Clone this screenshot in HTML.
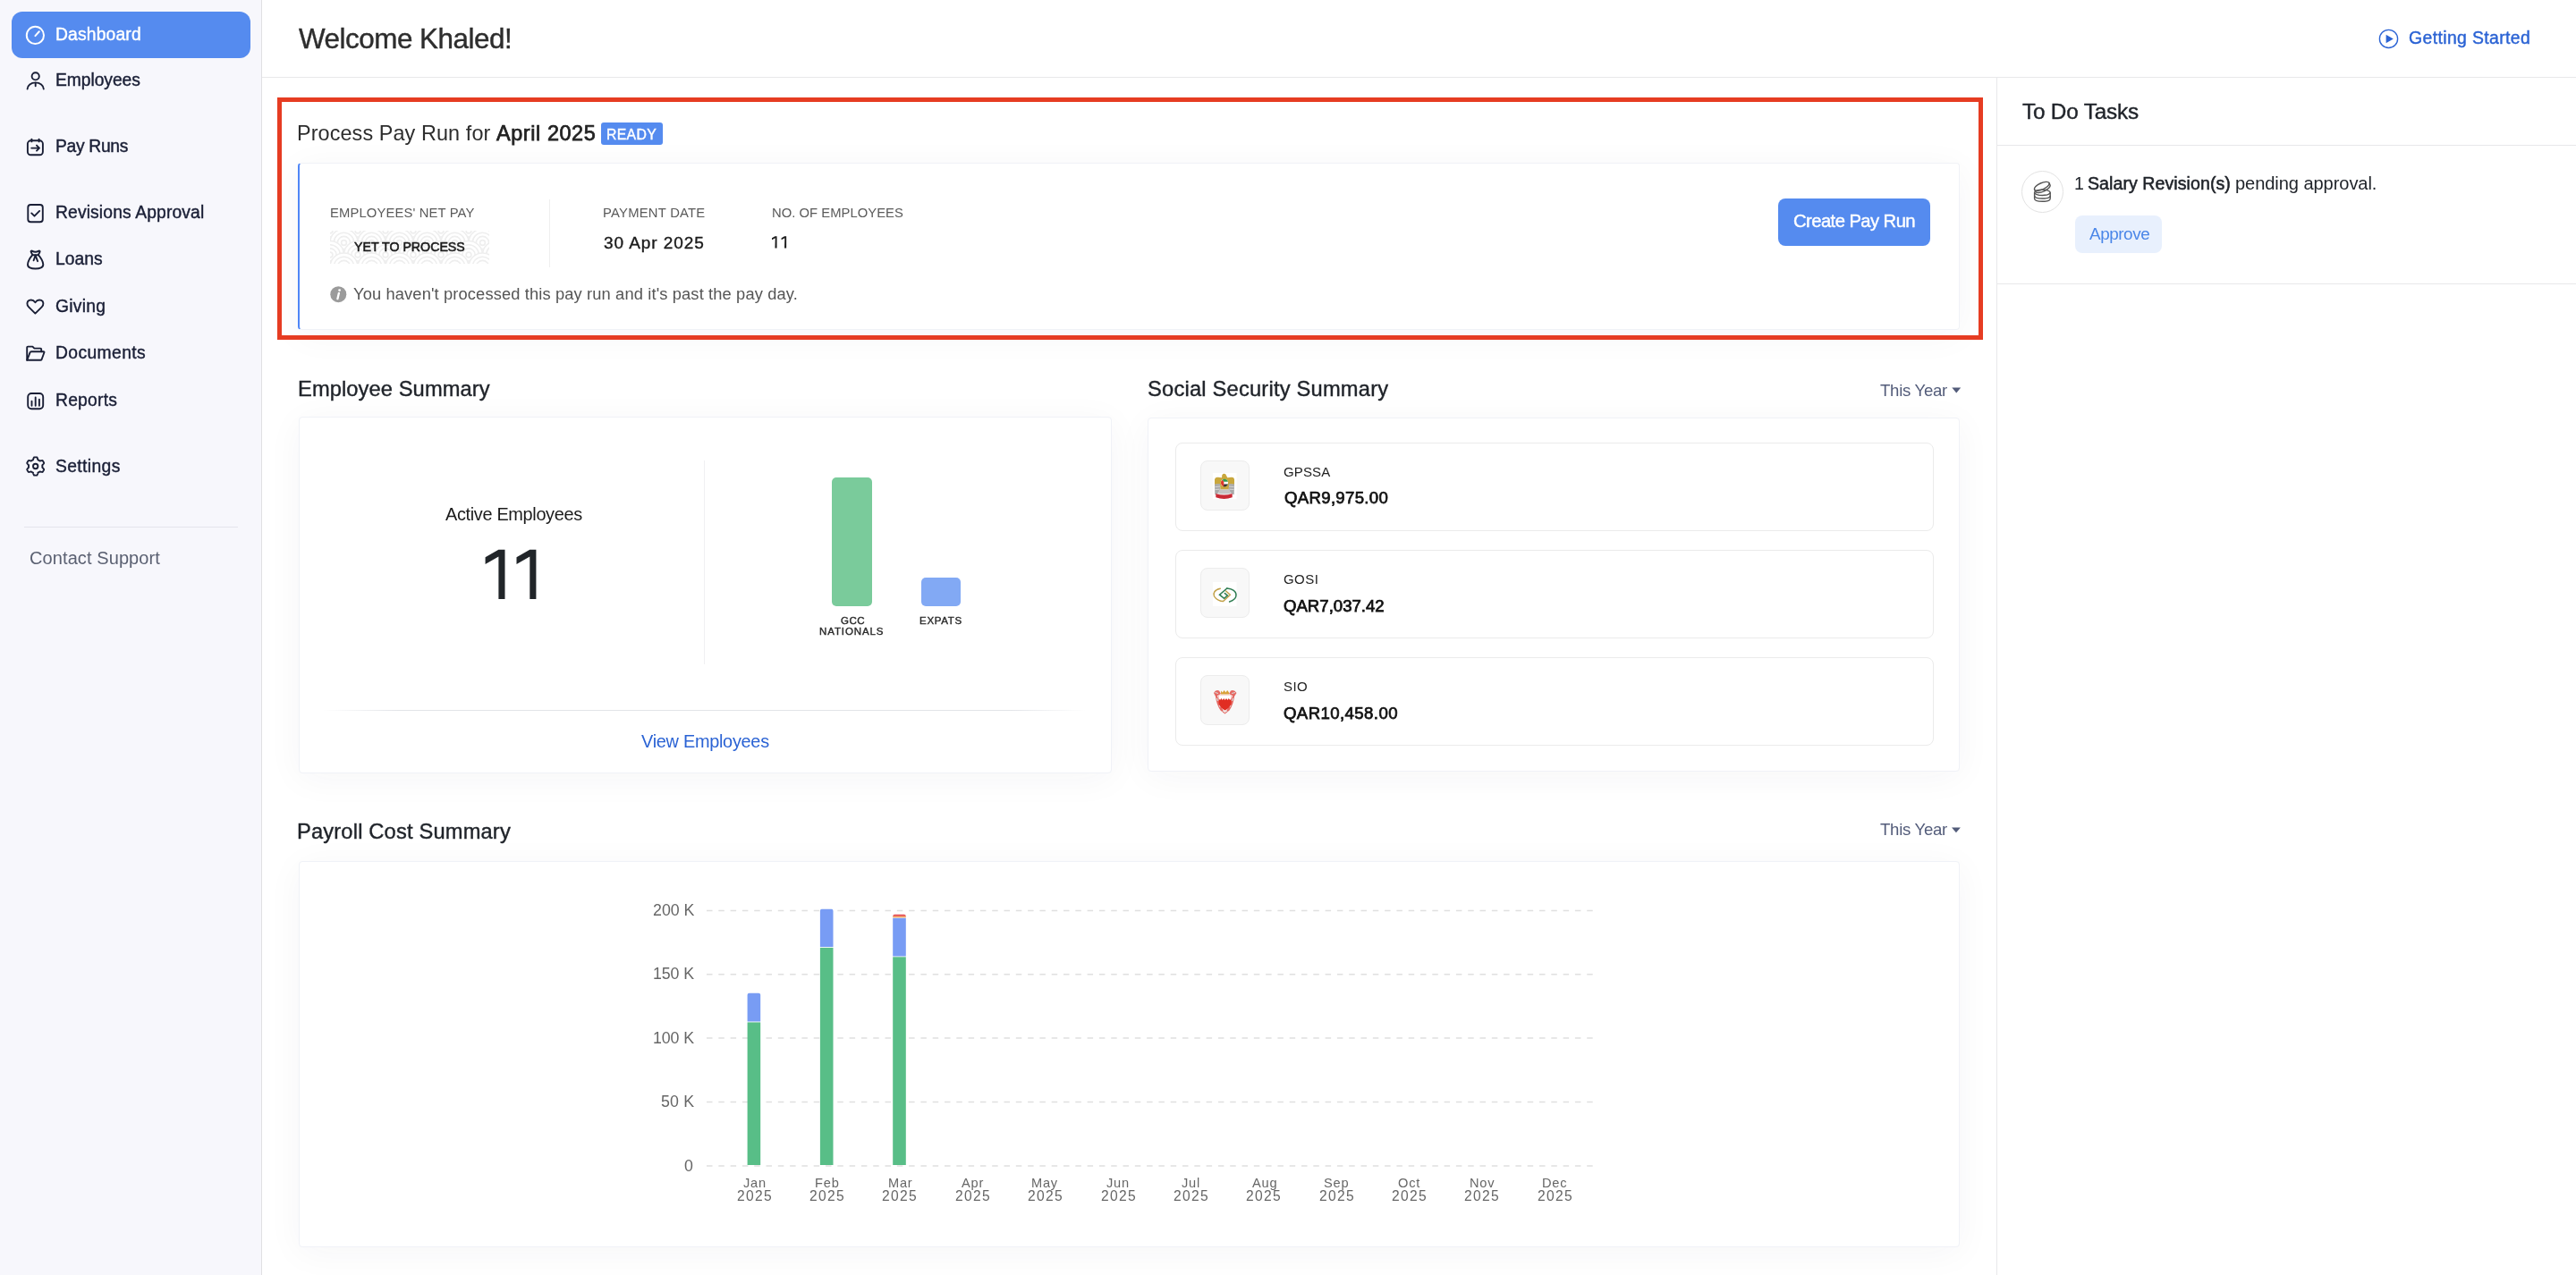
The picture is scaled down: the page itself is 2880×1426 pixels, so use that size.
<!DOCTYPE html>
<html><head><meta charset="utf-8"><title>Dashboard</title>
<style>
html,body{margin:0;padding:0;width:2880px;height:1426px;overflow:hidden;background:#ffffff;}
body{position:relative;font-family:"Liberation Sans",sans-serif;}
.a{position:absolute;box-sizing:border-box;}
.t{position:absolute;white-space:nowrap;line-height:1;will-change:transform;font-family:"Liberation Sans",sans-serif;}
</style></head><body>
<div class="a" style="left:0px;top:0px;width:292px;height:1426px;background:#f7f7fc;"></div>
<div class="a" style="left:292px;top:0px;width:1px;height:1426px;background:#e0e0e3;"></div>
<div class="a" style="left:13px;top:13px;width:267px;height:52px;background:#558bef;border-radius:12px;"></div>
<div class="a" style="left:27px;top:589px;width:239px;height:1px;background:#e4e4ec;"></div>
<div class="a" style="left:293px;top:86px;width:2587px;height:1px;background:#e8e8ea;"></div>
<div class="a" style="left:2232px;top:87px;width:1px;height:1339px;background:#e8e8ea;"></div>
<div class="a" style="left:2233px;top:162px;width:647px;height:1px;background:#e8e8ea;"></div>
<div class="a" style="left:2233px;top:317px;width:647px;height:1px;background:#e8e8ea;"></div>
<div class="a" style="left:2260px;top:190.5px;width:47px;height:47px;border:1px solid #e2e2e2;border-radius:50%;background:#fff;"></div>
<div class="a" style="left:2320px;top:240.5px;width:97px;height:42px;background:#e8f0fd;border-radius:8px;"></div>
<div class="a" style="left:333px;top:182px;width:1858px;height:187px;background:#fff;border:1px solid #f0f2f7;border-left:2px solid #4f86f7;border-radius:4px;box-shadow:0 6px 40px rgba(40,45,80,0.045);"></div>
<div class="a" style="left:672px;top:137px;width:69px;height:25px;background:#558bef;border-radius:3px;"></div>
<div class="a" style="left:614px;top:223px;width:1px;height:76px;background:#efefef;"></div>
<div class="a" style="left:1988px;top:222px;width:170px;height:53px;background:#558bef;border-radius:8px;"></div>
<div class="a" style="left:310px;top:109px;width:1907px;height:271px;border:5px solid #e63c22;"></div>
<div class="a" style="left:334px;top:466px;width:908.5px;height:399px;background:#fff;border:1px solid #f0f2f7;border-radius:4px;box-shadow:0 6px 40px rgba(40,45,80,0.045);"></div>
<div class="a" style="left:787px;top:515px;width:1px;height:228px;background:#f0f0f2;"></div>
<div class="a" style="left:930px;top:534px;width:45px;height:144px;background:#7acb9b;border-radius:5px;"></div>
<div class="a" style="left:1029.6px;top:646px;width:44.6px;height:32px;background:#82a9f4;border-radius:5px;"></div>
<div class="a" style="left:360px;top:794px;width:854px;height:1px;background:linear-gradient(90deg,rgba(226,228,232,0),#e2e4e8 10%,#e2e4e8 90%,rgba(226,228,232,0));"></div>
<div class="a" style="left:1283px;top:466.5px;width:908px;height:396px;background:#fff;border:1px solid #f0f2f7;border-radius:4px;box-shadow:0 6px 40px rgba(40,45,80,0.045);"></div>
<div class="a" style="left:1313.5px;top:494.5px;width:848px;height:99px;border:1px solid #ebebeb;border-radius:8px;background:#fff;"></div>
<div class="a" style="left:1342px;top:514.5px;width:55px;height:56px;border:1px solid #ececec;border-radius:8px;background:#f8f8f8;"></div>
<div class="a" style="left:1313.5px;top:614.5px;width:848px;height:99px;border:1px solid #ebebeb;border-radius:8px;background:#fff;"></div>
<div class="a" style="left:1342px;top:634.5px;width:55px;height:56px;border:1px solid #ececec;border-radius:8px;background:#f8f8f8;"></div>
<div class="a" style="left:1313.5px;top:734.5px;width:848px;height:99px;border:1px solid #ebebeb;border-radius:8px;background:#fff;"></div>
<div class="a" style="left:1342px;top:754.5px;width:55px;height:56px;border:1px solid #ececec;border-radius:8px;background:#f8f8f8;"></div>
<div class="a" style="left:334px;top:962.5px;width:1857px;height:432px;background:#fff;border:1px solid #f0f2f7;border-radius:4px;box-shadow:0 6px 40px rgba(40,45,80,0.045);"></div>
<svg class="a" style="left:369px;top:258px;width:178px;height:37px;" width="178" height="37" viewBox="0 0 178 37"><rect width="178" height="37" fill="#fff"/><circle cx="-15.5" cy="-13.5" r="15.5" fill="#fff" stroke="#eeeeee" stroke-width="1.6"/><circle cx="-15.5" cy="-13.5" r="11.3" fill="none" stroke="#eeeeee" stroke-width="1.6"/><circle cx="-15.5" cy="-13.5" r="7.1" fill="none" stroke="#eeeeee" stroke-width="1.6"/><circle cx="-15.5" cy="-13.5" r="2.9" fill="none" stroke="#eeeeee" stroke-width="1.6"/><circle cx="15.5" cy="-13.5" r="15.5" fill="#fff" stroke="#eeeeee" stroke-width="1.6"/><circle cx="15.5" cy="-13.5" r="11.3" fill="none" stroke="#eeeeee" stroke-width="1.6"/><circle cx="15.5" cy="-13.5" r="7.1" fill="none" stroke="#eeeeee" stroke-width="1.6"/><circle cx="15.5" cy="-13.5" r="2.9" fill="none" stroke="#eeeeee" stroke-width="1.6"/><circle cx="46.5" cy="-13.5" r="15.5" fill="#fff" stroke="#eeeeee" stroke-width="1.6"/><circle cx="46.5" cy="-13.5" r="11.3" fill="none" stroke="#eeeeee" stroke-width="1.6"/><circle cx="46.5" cy="-13.5" r="7.1" fill="none" stroke="#eeeeee" stroke-width="1.6"/><circle cx="46.5" cy="-13.5" r="2.9" fill="none" stroke="#eeeeee" stroke-width="1.6"/><circle cx="77.5" cy="-13.5" r="15.5" fill="#fff" stroke="#eeeeee" stroke-width="1.6"/><circle cx="77.5" cy="-13.5" r="11.3" fill="none" stroke="#eeeeee" stroke-width="1.6"/><circle cx="77.5" cy="-13.5" r="7.1" fill="none" stroke="#eeeeee" stroke-width="1.6"/><circle cx="77.5" cy="-13.5" r="2.9" fill="none" stroke="#eeeeee" stroke-width="1.6"/><circle cx="108.5" cy="-13.5" r="15.5" fill="#fff" stroke="#eeeeee" stroke-width="1.6"/><circle cx="108.5" cy="-13.5" r="11.3" fill="none" stroke="#eeeeee" stroke-width="1.6"/><circle cx="108.5" cy="-13.5" r="7.1" fill="none" stroke="#eeeeee" stroke-width="1.6"/><circle cx="108.5" cy="-13.5" r="2.9" fill="none" stroke="#eeeeee" stroke-width="1.6"/><circle cx="139.5" cy="-13.5" r="15.5" fill="#fff" stroke="#eeeeee" stroke-width="1.6"/><circle cx="139.5" cy="-13.5" r="11.3" fill="none" stroke="#eeeeee" stroke-width="1.6"/><circle cx="139.5" cy="-13.5" r="7.1" fill="none" stroke="#eeeeee" stroke-width="1.6"/><circle cx="139.5" cy="-13.5" r="2.9" fill="none" stroke="#eeeeee" stroke-width="1.6"/><circle cx="170.5" cy="-13.5" r="15.5" fill="#fff" stroke="#eeeeee" stroke-width="1.6"/><circle cx="170.5" cy="-13.5" r="11.3" fill="none" stroke="#eeeeee" stroke-width="1.6"/><circle cx="170.5" cy="-13.5" r="7.1" fill="none" stroke="#eeeeee" stroke-width="1.6"/><circle cx="170.5" cy="-13.5" r="2.9" fill="none" stroke="#eeeeee" stroke-width="1.6"/><circle cx="201.5" cy="-13.5" r="15.5" fill="#fff" stroke="#eeeeee" stroke-width="1.6"/><circle cx="201.5" cy="-13.5" r="11.3" fill="none" stroke="#eeeeee" stroke-width="1.6"/><circle cx="201.5" cy="-13.5" r="7.1" fill="none" stroke="#eeeeee" stroke-width="1.6"/><circle cx="201.5" cy="-13.5" r="2.9" fill="none" stroke="#eeeeee" stroke-width="1.6"/><circle cx="232.5" cy="-13.5" r="15.5" fill="#fff" stroke="#eeeeee" stroke-width="1.6"/><circle cx="232.5" cy="-13.5" r="11.3" fill="none" stroke="#eeeeee" stroke-width="1.6"/><circle cx="232.5" cy="-13.5" r="7.1" fill="none" stroke="#eeeeee" stroke-width="1.6"/><circle cx="232.5" cy="-13.5" r="2.9" fill="none" stroke="#eeeeee" stroke-width="1.6"/><circle cx="-31.0" cy="0.0" r="15.5" fill="#fff" stroke="#eeeeee" stroke-width="1.6"/><circle cx="-31.0" cy="0.0" r="11.3" fill="none" stroke="#eeeeee" stroke-width="1.6"/><circle cx="-31.0" cy="0.0" r="7.1" fill="none" stroke="#eeeeee" stroke-width="1.6"/><circle cx="-31.0" cy="0.0" r="2.9" fill="none" stroke="#eeeeee" stroke-width="1.6"/><circle cx="0.0" cy="0.0" r="15.5" fill="#fff" stroke="#eeeeee" stroke-width="1.6"/><circle cx="0.0" cy="0.0" r="11.3" fill="none" stroke="#eeeeee" stroke-width="1.6"/><circle cx="0.0" cy="0.0" r="7.1" fill="none" stroke="#eeeeee" stroke-width="1.6"/><circle cx="0.0" cy="0.0" r="2.9" fill="none" stroke="#eeeeee" stroke-width="1.6"/><circle cx="31.0" cy="0.0" r="15.5" fill="#fff" stroke="#eeeeee" stroke-width="1.6"/><circle cx="31.0" cy="0.0" r="11.3" fill="none" stroke="#eeeeee" stroke-width="1.6"/><circle cx="31.0" cy="0.0" r="7.1" fill="none" stroke="#eeeeee" stroke-width="1.6"/><circle cx="31.0" cy="0.0" r="2.9" fill="none" stroke="#eeeeee" stroke-width="1.6"/><circle cx="62.0" cy="0.0" r="15.5" fill="#fff" stroke="#eeeeee" stroke-width="1.6"/><circle cx="62.0" cy="0.0" r="11.3" fill="none" stroke="#eeeeee" stroke-width="1.6"/><circle cx="62.0" cy="0.0" r="7.1" fill="none" stroke="#eeeeee" stroke-width="1.6"/><circle cx="62.0" cy="0.0" r="2.9" fill="none" stroke="#eeeeee" stroke-width="1.6"/><circle cx="93.0" cy="0.0" r="15.5" fill="#fff" stroke="#eeeeee" stroke-width="1.6"/><circle cx="93.0" cy="0.0" r="11.3" fill="none" stroke="#eeeeee" stroke-width="1.6"/><circle cx="93.0" cy="0.0" r="7.1" fill="none" stroke="#eeeeee" stroke-width="1.6"/><circle cx="93.0" cy="0.0" r="2.9" fill="none" stroke="#eeeeee" stroke-width="1.6"/><circle cx="124.0" cy="0.0" r="15.5" fill="#fff" stroke="#eeeeee" stroke-width="1.6"/><circle cx="124.0" cy="0.0" r="11.3" fill="none" stroke="#eeeeee" stroke-width="1.6"/><circle cx="124.0" cy="0.0" r="7.1" fill="none" stroke="#eeeeee" stroke-width="1.6"/><circle cx="124.0" cy="0.0" r="2.9" fill="none" stroke="#eeeeee" stroke-width="1.6"/><circle cx="155.0" cy="0.0" r="15.5" fill="#fff" stroke="#eeeeee" stroke-width="1.6"/><circle cx="155.0" cy="0.0" r="11.3" fill="none" stroke="#eeeeee" stroke-width="1.6"/><circle cx="155.0" cy="0.0" r="7.1" fill="none" stroke="#eeeeee" stroke-width="1.6"/><circle cx="155.0" cy="0.0" r="2.9" fill="none" stroke="#eeeeee" stroke-width="1.6"/><circle cx="186.0" cy="0.0" r="15.5" fill="#fff" stroke="#eeeeee" stroke-width="1.6"/><circle cx="186.0" cy="0.0" r="11.3" fill="none" stroke="#eeeeee" stroke-width="1.6"/><circle cx="186.0" cy="0.0" r="7.1" fill="none" stroke="#eeeeee" stroke-width="1.6"/><circle cx="186.0" cy="0.0" r="2.9" fill="none" stroke="#eeeeee" stroke-width="1.6"/><circle cx="217.0" cy="0.0" r="15.5" fill="#fff" stroke="#eeeeee" stroke-width="1.6"/><circle cx="217.0" cy="0.0" r="11.3" fill="none" stroke="#eeeeee" stroke-width="1.6"/><circle cx="217.0" cy="0.0" r="7.1" fill="none" stroke="#eeeeee" stroke-width="1.6"/><circle cx="217.0" cy="0.0" r="2.9" fill="none" stroke="#eeeeee" stroke-width="1.6"/><circle cx="-15.5" cy="13.5" r="15.5" fill="#fff" stroke="#eeeeee" stroke-width="1.6"/><circle cx="-15.5" cy="13.5" r="11.3" fill="none" stroke="#eeeeee" stroke-width="1.6"/><circle cx="-15.5" cy="13.5" r="7.1" fill="none" stroke="#eeeeee" stroke-width="1.6"/><circle cx="-15.5" cy="13.5" r="2.9" fill="none" stroke="#eeeeee" stroke-width="1.6"/><circle cx="15.5" cy="13.5" r="15.5" fill="#fff" stroke="#eeeeee" stroke-width="1.6"/><circle cx="15.5" cy="13.5" r="11.3" fill="none" stroke="#eeeeee" stroke-width="1.6"/><circle cx="15.5" cy="13.5" r="7.1" fill="none" stroke="#eeeeee" stroke-width="1.6"/><circle cx="15.5" cy="13.5" r="2.9" fill="none" stroke="#eeeeee" stroke-width="1.6"/><circle cx="46.5" cy="13.5" r="15.5" fill="#fff" stroke="#eeeeee" stroke-width="1.6"/><circle cx="46.5" cy="13.5" r="11.3" fill="none" stroke="#eeeeee" stroke-width="1.6"/><circle cx="46.5" cy="13.5" r="7.1" fill="none" stroke="#eeeeee" stroke-width="1.6"/><circle cx="46.5" cy="13.5" r="2.9" fill="none" stroke="#eeeeee" stroke-width="1.6"/><circle cx="77.5" cy="13.5" r="15.5" fill="#fff" stroke="#eeeeee" stroke-width="1.6"/><circle cx="77.5" cy="13.5" r="11.3" fill="none" stroke="#eeeeee" stroke-width="1.6"/><circle cx="77.5" cy="13.5" r="7.1" fill="none" stroke="#eeeeee" stroke-width="1.6"/><circle cx="77.5" cy="13.5" r="2.9" fill="none" stroke="#eeeeee" stroke-width="1.6"/><circle cx="108.5" cy="13.5" r="15.5" fill="#fff" stroke="#eeeeee" stroke-width="1.6"/><circle cx="108.5" cy="13.5" r="11.3" fill="none" stroke="#eeeeee" stroke-width="1.6"/><circle cx="108.5" cy="13.5" r="7.1" fill="none" stroke="#eeeeee" stroke-width="1.6"/><circle cx="108.5" cy="13.5" r="2.9" fill="none" stroke="#eeeeee" stroke-width="1.6"/><circle cx="139.5" cy="13.5" r="15.5" fill="#fff" stroke="#eeeeee" stroke-width="1.6"/><circle cx="139.5" cy="13.5" r="11.3" fill="none" stroke="#eeeeee" stroke-width="1.6"/><circle cx="139.5" cy="13.5" r="7.1" fill="none" stroke="#eeeeee" stroke-width="1.6"/><circle cx="139.5" cy="13.5" r="2.9" fill="none" stroke="#eeeeee" stroke-width="1.6"/><circle cx="170.5" cy="13.5" r="15.5" fill="#fff" stroke="#eeeeee" stroke-width="1.6"/><circle cx="170.5" cy="13.5" r="11.3" fill="none" stroke="#eeeeee" stroke-width="1.6"/><circle cx="170.5" cy="13.5" r="7.1" fill="none" stroke="#eeeeee" stroke-width="1.6"/><circle cx="170.5" cy="13.5" r="2.9" fill="none" stroke="#eeeeee" stroke-width="1.6"/><circle cx="201.5" cy="13.5" r="15.5" fill="#fff" stroke="#eeeeee" stroke-width="1.6"/><circle cx="201.5" cy="13.5" r="11.3" fill="none" stroke="#eeeeee" stroke-width="1.6"/><circle cx="201.5" cy="13.5" r="7.1" fill="none" stroke="#eeeeee" stroke-width="1.6"/><circle cx="201.5" cy="13.5" r="2.9" fill="none" stroke="#eeeeee" stroke-width="1.6"/><circle cx="232.5" cy="13.5" r="15.5" fill="#fff" stroke="#eeeeee" stroke-width="1.6"/><circle cx="232.5" cy="13.5" r="11.3" fill="none" stroke="#eeeeee" stroke-width="1.6"/><circle cx="232.5" cy="13.5" r="7.1" fill="none" stroke="#eeeeee" stroke-width="1.6"/><circle cx="232.5" cy="13.5" r="2.9" fill="none" stroke="#eeeeee" stroke-width="1.6"/><circle cx="-31.0" cy="27.0" r="15.5" fill="#fff" stroke="#eeeeee" stroke-width="1.6"/><circle cx="-31.0" cy="27.0" r="11.3" fill="none" stroke="#eeeeee" stroke-width="1.6"/><circle cx="-31.0" cy="27.0" r="7.1" fill="none" stroke="#eeeeee" stroke-width="1.6"/><circle cx="-31.0" cy="27.0" r="2.9" fill="none" stroke="#eeeeee" stroke-width="1.6"/><circle cx="0.0" cy="27.0" r="15.5" fill="#fff" stroke="#eeeeee" stroke-width="1.6"/><circle cx="0.0" cy="27.0" r="11.3" fill="none" stroke="#eeeeee" stroke-width="1.6"/><circle cx="0.0" cy="27.0" r="7.1" fill="none" stroke="#eeeeee" stroke-width="1.6"/><circle cx="0.0" cy="27.0" r="2.9" fill="none" stroke="#eeeeee" stroke-width="1.6"/><circle cx="31.0" cy="27.0" r="15.5" fill="#fff" stroke="#eeeeee" stroke-width="1.6"/><circle cx="31.0" cy="27.0" r="11.3" fill="none" stroke="#eeeeee" stroke-width="1.6"/><circle cx="31.0" cy="27.0" r="7.1" fill="none" stroke="#eeeeee" stroke-width="1.6"/><circle cx="31.0" cy="27.0" r="2.9" fill="none" stroke="#eeeeee" stroke-width="1.6"/><circle cx="62.0" cy="27.0" r="15.5" fill="#fff" stroke="#eeeeee" stroke-width="1.6"/><circle cx="62.0" cy="27.0" r="11.3" fill="none" stroke="#eeeeee" stroke-width="1.6"/><circle cx="62.0" cy="27.0" r="7.1" fill="none" stroke="#eeeeee" stroke-width="1.6"/><circle cx="62.0" cy="27.0" r="2.9" fill="none" stroke="#eeeeee" stroke-width="1.6"/><circle cx="93.0" cy="27.0" r="15.5" fill="#fff" stroke="#eeeeee" stroke-width="1.6"/><circle cx="93.0" cy="27.0" r="11.3" fill="none" stroke="#eeeeee" stroke-width="1.6"/><circle cx="93.0" cy="27.0" r="7.1" fill="none" stroke="#eeeeee" stroke-width="1.6"/><circle cx="93.0" cy="27.0" r="2.9" fill="none" stroke="#eeeeee" stroke-width="1.6"/><circle cx="124.0" cy="27.0" r="15.5" fill="#fff" stroke="#eeeeee" stroke-width="1.6"/><circle cx="124.0" cy="27.0" r="11.3" fill="none" stroke="#eeeeee" stroke-width="1.6"/><circle cx="124.0" cy="27.0" r="7.1" fill="none" stroke="#eeeeee" stroke-width="1.6"/><circle cx="124.0" cy="27.0" r="2.9" fill="none" stroke="#eeeeee" stroke-width="1.6"/><circle cx="155.0" cy="27.0" r="15.5" fill="#fff" stroke="#eeeeee" stroke-width="1.6"/><circle cx="155.0" cy="27.0" r="11.3" fill="none" stroke="#eeeeee" stroke-width="1.6"/><circle cx="155.0" cy="27.0" r="7.1" fill="none" stroke="#eeeeee" stroke-width="1.6"/><circle cx="155.0" cy="27.0" r="2.9" fill="none" stroke="#eeeeee" stroke-width="1.6"/><circle cx="186.0" cy="27.0" r="15.5" fill="#fff" stroke="#eeeeee" stroke-width="1.6"/><circle cx="186.0" cy="27.0" r="11.3" fill="none" stroke="#eeeeee" stroke-width="1.6"/><circle cx="186.0" cy="27.0" r="7.1" fill="none" stroke="#eeeeee" stroke-width="1.6"/><circle cx="186.0" cy="27.0" r="2.9" fill="none" stroke="#eeeeee" stroke-width="1.6"/><circle cx="217.0" cy="27.0" r="15.5" fill="#fff" stroke="#eeeeee" stroke-width="1.6"/><circle cx="217.0" cy="27.0" r="11.3" fill="none" stroke="#eeeeee" stroke-width="1.6"/><circle cx="217.0" cy="27.0" r="7.1" fill="none" stroke="#eeeeee" stroke-width="1.6"/><circle cx="217.0" cy="27.0" r="2.9" fill="none" stroke="#eeeeee" stroke-width="1.6"/><circle cx="-15.5" cy="40.5" r="15.5" fill="#fff" stroke="#eeeeee" stroke-width="1.6"/><circle cx="-15.5" cy="40.5" r="11.3" fill="none" stroke="#eeeeee" stroke-width="1.6"/><circle cx="-15.5" cy="40.5" r="7.1" fill="none" stroke="#eeeeee" stroke-width="1.6"/><circle cx="-15.5" cy="40.5" r="2.9" fill="none" stroke="#eeeeee" stroke-width="1.6"/><circle cx="15.5" cy="40.5" r="15.5" fill="#fff" stroke="#eeeeee" stroke-width="1.6"/><circle cx="15.5" cy="40.5" r="11.3" fill="none" stroke="#eeeeee" stroke-width="1.6"/><circle cx="15.5" cy="40.5" r="7.1" fill="none" stroke="#eeeeee" stroke-width="1.6"/><circle cx="15.5" cy="40.5" r="2.9" fill="none" stroke="#eeeeee" stroke-width="1.6"/><circle cx="46.5" cy="40.5" r="15.5" fill="#fff" stroke="#eeeeee" stroke-width="1.6"/><circle cx="46.5" cy="40.5" r="11.3" fill="none" stroke="#eeeeee" stroke-width="1.6"/><circle cx="46.5" cy="40.5" r="7.1" fill="none" stroke="#eeeeee" stroke-width="1.6"/><circle cx="46.5" cy="40.5" r="2.9" fill="none" stroke="#eeeeee" stroke-width="1.6"/><circle cx="77.5" cy="40.5" r="15.5" fill="#fff" stroke="#eeeeee" stroke-width="1.6"/><circle cx="77.5" cy="40.5" r="11.3" fill="none" stroke="#eeeeee" stroke-width="1.6"/><circle cx="77.5" cy="40.5" r="7.1" fill="none" stroke="#eeeeee" stroke-width="1.6"/><circle cx="77.5" cy="40.5" r="2.9" fill="none" stroke="#eeeeee" stroke-width="1.6"/><circle cx="108.5" cy="40.5" r="15.5" fill="#fff" stroke="#eeeeee" stroke-width="1.6"/><circle cx="108.5" cy="40.5" r="11.3" fill="none" stroke="#eeeeee" stroke-width="1.6"/><circle cx="108.5" cy="40.5" r="7.1" fill="none" stroke="#eeeeee" stroke-width="1.6"/><circle cx="108.5" cy="40.5" r="2.9" fill="none" stroke="#eeeeee" stroke-width="1.6"/><circle cx="139.5" cy="40.5" r="15.5" fill="#fff" stroke="#eeeeee" stroke-width="1.6"/><circle cx="139.5" cy="40.5" r="11.3" fill="none" stroke="#eeeeee" stroke-width="1.6"/><circle cx="139.5" cy="40.5" r="7.1" fill="none" stroke="#eeeeee" stroke-width="1.6"/><circle cx="139.5" cy="40.5" r="2.9" fill="none" stroke="#eeeeee" stroke-width="1.6"/><circle cx="170.5" cy="40.5" r="15.5" fill="#fff" stroke="#eeeeee" stroke-width="1.6"/><circle cx="170.5" cy="40.5" r="11.3" fill="none" stroke="#eeeeee" stroke-width="1.6"/><circle cx="170.5" cy="40.5" r="7.1" fill="none" stroke="#eeeeee" stroke-width="1.6"/><circle cx="170.5" cy="40.5" r="2.9" fill="none" stroke="#eeeeee" stroke-width="1.6"/><circle cx="201.5" cy="40.5" r="15.5" fill="#fff" stroke="#eeeeee" stroke-width="1.6"/><circle cx="201.5" cy="40.5" r="11.3" fill="none" stroke="#eeeeee" stroke-width="1.6"/><circle cx="201.5" cy="40.5" r="7.1" fill="none" stroke="#eeeeee" stroke-width="1.6"/><circle cx="201.5" cy="40.5" r="2.9" fill="none" stroke="#eeeeee" stroke-width="1.6"/><circle cx="232.5" cy="40.5" r="15.5" fill="#fff" stroke="#eeeeee" stroke-width="1.6"/><circle cx="232.5" cy="40.5" r="11.3" fill="none" stroke="#eeeeee" stroke-width="1.6"/><circle cx="232.5" cy="40.5" r="7.1" fill="none" stroke="#eeeeee" stroke-width="1.6"/><circle cx="232.5" cy="40.5" r="2.9" fill="none" stroke="#eeeeee" stroke-width="1.6"/><circle cx="-31.0" cy="54.0" r="15.5" fill="#fff" stroke="#eeeeee" stroke-width="1.6"/><circle cx="-31.0" cy="54.0" r="11.3" fill="none" stroke="#eeeeee" stroke-width="1.6"/><circle cx="-31.0" cy="54.0" r="7.1" fill="none" stroke="#eeeeee" stroke-width="1.6"/><circle cx="-31.0" cy="54.0" r="2.9" fill="none" stroke="#eeeeee" stroke-width="1.6"/><circle cx="0.0" cy="54.0" r="15.5" fill="#fff" stroke="#eeeeee" stroke-width="1.6"/><circle cx="0.0" cy="54.0" r="11.3" fill="none" stroke="#eeeeee" stroke-width="1.6"/><circle cx="0.0" cy="54.0" r="7.1" fill="none" stroke="#eeeeee" stroke-width="1.6"/><circle cx="0.0" cy="54.0" r="2.9" fill="none" stroke="#eeeeee" stroke-width="1.6"/><circle cx="31.0" cy="54.0" r="15.5" fill="#fff" stroke="#eeeeee" stroke-width="1.6"/><circle cx="31.0" cy="54.0" r="11.3" fill="none" stroke="#eeeeee" stroke-width="1.6"/><circle cx="31.0" cy="54.0" r="7.1" fill="none" stroke="#eeeeee" stroke-width="1.6"/><circle cx="31.0" cy="54.0" r="2.9" fill="none" stroke="#eeeeee" stroke-width="1.6"/><circle cx="62.0" cy="54.0" r="15.5" fill="#fff" stroke="#eeeeee" stroke-width="1.6"/><circle cx="62.0" cy="54.0" r="11.3" fill="none" stroke="#eeeeee" stroke-width="1.6"/><circle cx="62.0" cy="54.0" r="7.1" fill="none" stroke="#eeeeee" stroke-width="1.6"/><circle cx="62.0" cy="54.0" r="2.9" fill="none" stroke="#eeeeee" stroke-width="1.6"/><circle cx="93.0" cy="54.0" r="15.5" fill="#fff" stroke="#eeeeee" stroke-width="1.6"/><circle cx="93.0" cy="54.0" r="11.3" fill="none" stroke="#eeeeee" stroke-width="1.6"/><circle cx="93.0" cy="54.0" r="7.1" fill="none" stroke="#eeeeee" stroke-width="1.6"/><circle cx="93.0" cy="54.0" r="2.9" fill="none" stroke="#eeeeee" stroke-width="1.6"/><circle cx="124.0" cy="54.0" r="15.5" fill="#fff" stroke="#eeeeee" stroke-width="1.6"/><circle cx="124.0" cy="54.0" r="11.3" fill="none" stroke="#eeeeee" stroke-width="1.6"/><circle cx="124.0" cy="54.0" r="7.1" fill="none" stroke="#eeeeee" stroke-width="1.6"/><circle cx="124.0" cy="54.0" r="2.9" fill="none" stroke="#eeeeee" stroke-width="1.6"/><circle cx="155.0" cy="54.0" r="15.5" fill="#fff" stroke="#eeeeee" stroke-width="1.6"/><circle cx="155.0" cy="54.0" r="11.3" fill="none" stroke="#eeeeee" stroke-width="1.6"/><circle cx="155.0" cy="54.0" r="7.1" fill="none" stroke="#eeeeee" stroke-width="1.6"/><circle cx="155.0" cy="54.0" r="2.9" fill="none" stroke="#eeeeee" stroke-width="1.6"/><circle cx="186.0" cy="54.0" r="15.5" fill="#fff" stroke="#eeeeee" stroke-width="1.6"/><circle cx="186.0" cy="54.0" r="11.3" fill="none" stroke="#eeeeee" stroke-width="1.6"/><circle cx="186.0" cy="54.0" r="7.1" fill="none" stroke="#eeeeee" stroke-width="1.6"/><circle cx="186.0" cy="54.0" r="2.9" fill="none" stroke="#eeeeee" stroke-width="1.6"/><circle cx="217.0" cy="54.0" r="15.5" fill="#fff" stroke="#eeeeee" stroke-width="1.6"/><circle cx="217.0" cy="54.0" r="11.3" fill="none" stroke="#eeeeee" stroke-width="1.6"/><circle cx="217.0" cy="54.0" r="7.1" fill="none" stroke="#eeeeee" stroke-width="1.6"/><circle cx="217.0" cy="54.0" r="2.9" fill="none" stroke="#eeeeee" stroke-width="1.6"/></svg>
<svg class="a" style="left:0;top:0;" width="2880" height="1426" viewBox="0 0 2880 1426"><g fill="none" stroke="#fff" stroke-width="2" stroke-linecap="round"><circle cx="39.4" cy="39.4" r="9.6"/><line x1="39.4" y1="40.1" x2="43.8" y2="35.3"/></g><g fill="none" stroke="#1a1f36" stroke-width="1.9" stroke-linecap="round" stroke-linejoin="round"><circle cx="39.7" cy="85.3" r="4.1"/><path d="M30.6,99.6 A9.1,7.2 0 0 1 48.8,99.6"/><line x1="39.7" y1="92.6" x2="39.7" y2="96.3"/><rect x="30.9" y="157.3" width="17" height="16" rx="3.5"/><line x1="35.4" y1="155.6" x2="35.4" y2="158.4"/><line x1="43.6" y1="155.6" x2="43.6" y2="158.4"/><path d="M35.2,165.6 H44 M41,162.6 L44,165.6 L41,168.6"/><rect x="31.3" y="229" width="16.5" height="19.3" rx="3"/><path d="M35.2,238.4 L38.5,241.7 L44.2,235.9"/><path d="M36.3,285.2 C33.5,288.5 31.2,292.5 31,295.8 C30.9,299.2 34.5,300.5 39.6,300.5 C44.7,300.5 48.4,299.2 48.3,295.8 C48.1,292.5 45.8,288.5 42.9,285.2 Z"/><path d="M36.3,285 L34.6,281.6 Q34.4,280.2 35.8,280.6 Q39.6,282.8 43.4,280.6 Q44.8,280.2 44.6,281.6 L42.9,285"/><path d="M37.6,291.3 L39.6,285.6 L42.1,292.2"/><path d="M39.4,350.6 L32.1,343.4 C29.6,340.9 29.9,337.1 32.6,335.9 C35.2,334.8 37.8,336 39.4,338.3 C41,336 43.6,334.8 46.2,335.9 C48.9,337.1 49.2,340.9 46.7,343.4 Z"/><path d="M30.2,402.8 V388.6 Q30.2,387.6 31.2,387.6 H36.4 L38.4,389.6 H45.2 Q46.2,389.6 46.2,390.6 V393.2"/><path d="M30.2,402.8 L33.6,394.2 Q34,393.2 35,393.2 H48.6 Q49.8,393.2 49.4,394.3 L46.6,402 Q46.2,402.8 45.3,402.8 Z"/><rect x="31.2" y="440" width="17" height="17.3" rx="4"/><path d="M35.5,448.8 V453.8 M39.7,444.5 V453.8 M43.9,446.8 V453.8"/></g><g fill="none" stroke="#1a1f36" stroke-width="1.9" stroke-linecap="round" stroke-linejoin="round"><path d="M39.70,511.35 L39.97,511.35 L40.23,511.36 L40.50,511.38 L40.76,511.41 L41.02,511.44 L41.29,511.47 L41.51,511.74 L41.69,512.11 L41.86,512.50 L42.00,512.90 L42.13,513.30 L42.24,513.70 L42.33,514.07 L42.44,514.36 L42.63,514.43 L42.81,514.51 L42.99,514.60 L43.17,514.68 L43.35,514.78 L43.53,514.87 L43.70,514.98 L43.87,515.08 L44.03,515.20 L44.20,515.31 L44.36,515.43 L44.51,515.55 L44.82,515.51 L45.19,515.40 L45.58,515.30 L45.99,515.21 L46.41,515.13 L46.83,515.08 L47.24,515.06 L47.59,515.11 L47.75,515.32 L47.91,515.53 L48.06,515.75 L48.21,515.97 L48.35,516.20 L48.49,516.42 L48.62,516.66 L48.74,516.89 L48.86,517.13 L48.97,517.37 L49.08,517.62 L49.18,517.86 L49.05,518.19 L48.83,518.53 L48.57,518.87 L48.30,519.20 L48.01,519.50 L47.73,519.79 L47.45,520.06 L47.26,520.30 L47.28,520.50 L47.31,520.70 L47.33,520.90 L47.34,521.10 L47.35,521.30 L47.35,521.50 L47.35,521.70 L47.34,521.90 L47.33,522.10 L47.31,522.30 L47.28,522.50 L47.26,522.70 L47.45,522.94 L47.73,523.21 L48.01,523.50 L48.30,523.80 L48.57,524.13 L48.83,524.47 L49.05,524.81 L49.18,525.14 L49.08,525.38 L48.97,525.63 L48.86,525.87 L48.74,526.11 L48.62,526.34 L48.49,526.58 L48.35,526.80 L48.21,527.03 L48.06,527.25 L47.91,527.47 L47.75,527.68 L47.59,527.89 L47.24,527.94 L46.83,527.92 L46.41,527.87 L45.99,527.79 L45.58,527.70 L45.19,527.60 L44.82,527.49 L44.51,527.45 L44.36,527.57 L44.20,527.69 L44.03,527.80 L43.87,527.92 L43.70,528.02 L43.53,528.13 L43.35,528.22 L43.17,528.32 L42.99,528.40 L42.81,528.49 L42.63,528.57 L42.44,528.64 L42.33,528.93 L42.24,529.30 L42.13,529.70 L42.00,530.10 L41.86,530.50 L41.69,530.89 L41.51,531.26 L41.29,531.53 L41.02,531.56 L40.76,531.59 L40.50,531.62 L40.23,531.64 L39.97,531.65 L39.70,531.65 L39.43,531.65 L39.17,531.64 L38.90,531.62 L38.64,531.59 L38.38,531.56 L38.11,531.53 L37.89,531.26 L37.71,530.89 L37.54,530.50 L37.40,530.10 L37.27,529.70 L37.16,529.30 L37.07,528.93 L36.96,528.64 L36.77,528.57 L36.59,528.49 L36.41,528.40 L36.23,528.32 L36.05,528.22 L35.88,528.13 L35.70,528.02 L35.53,527.92 L35.37,527.80 L35.20,527.69 L35.04,527.57 L34.89,527.45 L34.58,527.49 L34.21,527.60 L33.82,527.70 L33.41,527.79 L32.99,527.87 L32.57,527.92 L32.16,527.94 L31.81,527.89 L31.65,527.68 L31.49,527.47 L31.34,527.25 L31.19,527.03 L31.05,526.80 L30.91,526.58 L30.78,526.34 L30.66,526.11 L30.54,525.87 L30.43,525.63 L30.32,525.38 L30.22,525.14 L30.35,524.81 L30.57,524.47 L30.83,524.13 L31.10,523.80 L31.39,523.50 L31.67,523.21 L31.95,522.94 L32.14,522.70 L32.12,522.50 L32.09,522.30 L32.07,522.10 L32.06,521.90 L32.05,521.70 L32.05,521.50 L32.05,521.30 L32.06,521.10 L32.07,520.90 L32.09,520.70 L32.12,520.50 L32.14,520.30 L31.95,520.06 L31.67,519.79 L31.39,519.50 L31.10,519.20 L30.83,518.87 L30.57,518.53 L30.35,518.19 L30.22,517.86 L30.32,517.62 L30.43,517.37 L30.54,517.13 L30.66,516.89 L30.78,516.66 L30.91,516.42 L31.05,516.20 L31.19,515.97 L31.34,515.75 L31.49,515.53 L31.65,515.32 L31.81,515.11 L32.16,515.06 L32.57,515.08 L32.99,515.13 L33.41,515.21 L33.82,515.30 L34.21,515.40 L34.58,515.51 L34.89,515.55 L35.04,515.43 L35.20,515.31 L35.37,515.20 L35.53,515.08 L35.70,514.98 L35.88,514.87 L36.05,514.78 L36.23,514.68 L36.41,514.60 L36.59,514.51 L36.77,514.43 L36.96,514.36 L37.07,514.07 L37.16,513.70 L37.27,513.30 L37.40,512.90 L37.54,512.50 L37.71,512.11 L37.89,511.74 L38.11,511.47 L38.38,511.44 L38.64,511.41 L38.90,511.38 L39.17,511.36 L39.43,511.35 L39.70,511.35 Z"/><circle cx="39.7" cy="521.5" r="2.7"/></g><circle cx="2670.5" cy="43.4" r="10.1" fill="none" stroke="#2b63d4" stroke-width="1.35"/><path d="M2667.6,38.8 L2675.8,43.5 L2667.6,48.2 Z" fill="#2b63d4"/><g fill="none" stroke="#555" stroke-width="1.4" stroke-linejoin="round"><ellipse cx="2283.4" cy="215.3" rx="8.8" ry="3.2"/><path d="M2274.6,215.3 V222 C2274.6,224 2278.5,225.3 2283.4,225.3 C2288.3,225.3 2292.2,224 2292.2,222 V215.3"/><path d="M2274.6,218.7 C2274.6,220.7 2278.5,222 2283.4,222 C2288.3,222 2292.2,220.7 2292.2,218.7"/><g transform="rotate(-24 2282.8 208.3)"><ellipse cx="2282.8" cy="208.3" rx="9" ry="3.6"/><path d="M2273.8,208.3 V210.8 C2273.8,212.8 2277.8,214.3 2282.8,214.3 C2287.8,214.3 2291.8,212.8 2291.8,210.8 V208.3"/></g></g><circle cx="378.3" cy="329.2" r="9" fill="#9b9b9b"/><circle cx="379.6" cy="324.6" r="1.4" fill="#fff"/><path d="M378.9,327.8 L377.4,334.2" stroke="#fff" stroke-width="2.3" stroke-linecap="round"/><path d="M2182.3,433.6 H2192.2 L2187.25,439.4 Z" fill="#535c7a"/><path d="M2182,925.6 H2191.9 L2186.95,931.3 Z" fill="#535c7a"/><rect x="1356" y="529" width="26.6" height="29.2" fill="#fff"/><g><path d="M1358,536 Q1358.8,533.4 1361.8,533.8 L1366,534.2 L1366.3,531.2 Q1368,528.9 1370.2,530.3 L1372.3,534.2 L1376.4,533.8 Q1379.6,533.4 1380,536 L1380,542 L1374.2,541.2 L1373.8,547.6 L1364.4,547.6 L1364,541.2 L1358,542 Z" fill="#c9a73d"/><path d="M1358,541.6 L1364,541 L1364.4,548 L1361.8,551.4 L1358.3,553.6 Z" fill="#a9a9a9"/><path d="M1380,541.6 L1374,541 L1373.6,548 L1376.2,551.4 L1379.7,553.6 Z" fill="#a9a9a9"/><path d="M1358.5,544.5 L1364,544 M1358.5,547.5 L1363.5,547.2 M1379.5,544.5 L1374,544 M1379.5,547.5 L1374.5,547.2" stroke="#dcdcdc" stroke-width="0.9"/><path d="M1363.2,547.4 L1374.8,547.4 L1376,552.4 L1362,552.4 Z" fill="#c4c4c4"/><circle cx="1368.9" cy="540.1" r="4.1" fill="#fff"/><path d="M1366.6,536.7 A4.1,4.1 0 0 1 1373,538.7 L1368.3,538.7 Z" fill="#2f9d50"/><path d="M1368.3,541.6 L1373,541.6 A4.1,4.1 0 0 1 1367.2,543.9 Z" fill="#333"/><path d="M1366.6,536.7 L1368.3,538.7 L1368.3,544.1 A4.1,4.1 0 0 1 1366.6,536.7 Z" fill="#de3a2c"/><path d="M1359.3,552 Q1368.5,555.2 1377.7,552 L1377.7,556.2 Q1368.5,559.6 1359.3,556.2 Z" fill="#c92a35"/></g><rect x="1356" y="651" width="26.6" height="27" fill="#fff"/><g fill="none" stroke-linecap="round"><path d="M1364.3,658.2 C1358,659.5 1355.8,663.5 1357.5,667 C1359.5,670.5 1364.5,672.5 1367.5,672.5 L1375.3,665.3 L1370.6,661" stroke="#c2a24a" stroke-width="1.5"/><path d="M1371.8,658 C1377,658.5 1382,661 1382,665.5 C1382,669.5 1378,672 1374.6,673" stroke="#2f7d52" stroke-width="1.5"/><path d="M1371.8,658 L1363.5,665.2 L1368.6,669.3 L1372.3,666 L1369.4,663.6" stroke="#2f7d52" stroke-width="1.6"/></g><g><path d="M1357,775 Q1359,771 1363,772.5 L1365,776 L1361,778 Q1363,786 1366,792 L1369.5,797.5 L1373,792 Q1376,786 1378,778 L1374,776 L1376,772.5 Q1380,771 1382.5,775 L1380,779 Q1379,788 1374.5,794.5 L1369.5,798.5 L1364.5,794.5 Q1360,788 1359,779 Z" fill="#e0433c" opacity="0.8"/><path d="M1358.5,774.5 L1362,775.5 M1377,775.5 L1381,774.5 M1360.5,781 L1361.5,784 M1378.5,781 L1377.5,784 M1363,789 L1364.5,791 M1376,789 L1374.5,791 M1367,795 L1368.5,796 M1372,795 L1370.5,796" stroke="#d9d9d9" stroke-width="1.2"/><path d="M1362.6,777.2 L1376.6,777.2 L1376.6,786 Q1375.8,791.2 1369.6,794.6 Q1363.4,791.2 1362.6,786 Z" fill="#e12d22"/><path d="M1362.6,777.2 H1376.6 V781 L1375.2,783 L1373.8,781 L1372.4,783 L1371,781 L1369.6,783 L1368.2,781 L1366.8,783 L1365.4,781 L1364,783 L1362.6,781 Z" fill="#fff"/><path d="M1365,776.5 L1365,772.5 L1366.8,774.5 L1368.6,772 L1370.4,774.5 L1372.2,772 L1374,774.5 L1374,776.5 Z" fill="#d9a23a"/></g><path d="M542.6,623.3 L542.6,631.1 L557.4,622.6 L557.4,669.9 L564.5,669.9 L564.5,614.8 L557.4,614.8 Z" fill="#212529"/><path d="M577.5,623.3 L577.5,631.1 L592.3,622.6 L592.3,669.9 L599.4,669.9 L599.4,614.8 L592.3,614.8 Z" fill="#212529"/><path d="M863.00,266.35 L863.00,268.23 L866.75,266.18 L866.45,277.60 L868.55,277.60 L868.55,264.30 L866.45,264.30 Z" fill="#1b1b1b"/><path d="M873.60,266.35 L873.60,268.23 L877.35,266.18 L877.05,277.60 L879.15,277.60 L879.15,264.30 L877.05,264.30 Z" fill="#1b1b1b"/><line x1="790" y1="1018.4" x2="1783" y2="1018.4" stroke="#e0e0e0" stroke-width="1.5" stroke-dasharray="6.5 6.8"/><line x1="790" y1="1089.8" x2="1783" y2="1089.8" stroke="#e0e0e0" stroke-width="1.5" stroke-dasharray="6.5 6.8"/><line x1="790" y1="1161.1" x2="1783" y2="1161.1" stroke="#e0e0e0" stroke-width="1.5" stroke-dasharray="6.5 6.8"/><line x1="790" y1="1232.5" x2="1783" y2="1232.5" stroke="#e0e0e0" stroke-width="1.5" stroke-dasharray="6.5 6.8"/><line x1="790" y1="1303.9" x2="1783" y2="1303.9" stroke="#e0e0e0" stroke-width="1.5" stroke-dasharray="6.5 6.8"/><path d="M835.6,1142.6 V1112.8 Q835.6,1110.8 837.6,1110.8 H848.2 Q850.2,1110.8 850.2,1112.8 V1142.6 Z" fill="#789cf4"/><rect x="835.6" y="1143.4" width="14.6" height="159.5999999999999" fill="#58be87"/><path d="M916.9,1059.1 V1018.7 Q916.9,1016.7 918.9,1016.7 H929.5 Q931.5,1016.7 931.5,1018.7 V1059.1 Z" fill="#789cf4"/><rect x="916.9" y="1059.9" width="14.6" height="243.0999999999999" fill="#58be87"/><path d="M998.2,1024.8 V1024.8 Q998.2,1022.8 1000.2,1022.8 H1010.8000000000001 Q1012.8000000000001,1022.8 1012.8000000000001,1024.8 V1024.8 Z" fill="#e4484d"/><rect x="998.2" y="1024.8" width="14.6" height="1.5" fill="#f3a55c"/><rect x="998.2" y="1026.8" width="14.6" height="42.700000000000045" fill="#789cf4"/><rect x="998.2" y="1070.3" width="14.6" height="232.70000000000005" fill="#58be87"/></svg>
<div class="t" id="nav_dash" style="left:62.46px;top:29.00px;font-size:19.30px;letter-spacing:0.169px;color:#ffffff;-webkit-text-stroke:0.4px #ffffff;">Dashboard</div>
<div class="t" id="nav_emp" style="left:62.46px;top:79.90px;font-size:19.30px;letter-spacing:-0.056px;color:#1a1f36;-webkit-text-stroke:0.4px #1a1f36;">Employees</div>
<div class="t" id="nav_pay" style="left:62.46px;top:154.00px;font-size:19.30px;letter-spacing:-0.321px;color:#1a1f36;-webkit-text-stroke:0.4px #1a1f36;">Pay Runs</div>
<div class="t" id="nav_rev" style="left:62.43px;top:228.10px;font-size:19.30px;letter-spacing:0.132px;color:#1a1f36;-webkit-text-stroke:0.4px #1a1f36;">Revisions Approval</div>
<div class="t" id="nav_loan" style="left:62.46px;top:279.90px;font-size:19.30px;letter-spacing:0.000px;color:#1a1f36;-webkit-text-stroke:0.4px #1a1f36;">Loans</div>
<div class="t" id="nav_giv" style="left:62.48px;top:332.60px;font-size:19.30px;letter-spacing:0.270px;color:#1a1f36;-webkit-text-stroke:0.4px #1a1f36;">Giving</div>
<div class="t" id="nav_doc" style="left:62.49px;top:384.81px;font-size:19.30px;letter-spacing:0.394px;color:#1a1f36;-webkit-text-stroke:0.4px #1a1f36;">Documents</div>
<div class="t" id="nav_rep" style="left:62.46px;top:438.10px;font-size:19.30px;letter-spacing:0.225px;color:#1a1f36;-webkit-text-stroke:0.4px #1a1f36;">Reports</div>
<div class="t" id="nav_set" style="left:62.46px;top:511.60px;font-size:19.30px;letter-spacing:0.386px;color:#1a1f36;-webkit-text-stroke:0.4px #1a1f36;">Settings</div>
<div class="t" id="contact" style="left:32.80px;top:614.00px;font-size:20.00px;letter-spacing:0.096px;color:#5b6172;">Contact Support</div>
<div class="t" id="welcome" style="left:333.89px;top:28.10px;font-size:31.40px;letter-spacing:-0.482px;color:#2d2d2d;-webkit-text-stroke:0.4px #2d2d2d;">Welcome Khaled!</div>
<div class="t" id="getting" style="left:2693.45px;top:32.81px;font-size:19.40px;letter-spacing:0.386px;color:#2b63d4;-webkit-text-stroke:0.4px #2b63d4;">Getting Started</div>
<div class="t" id="todo" style="left:2261.06px;top:113.10px;font-size:24.30px;letter-spacing:-0.180px;color:#1f2329;-webkit-text-stroke:0.4px #1f2329;">To Do Tasks</div>
<div class="t" id="sal1" style="left:2319.19px;top:196.31px;font-size:19.60px;letter-spacing:0.000px;color:#1f2329;">1</div>
<div class="t" id="sal2" style="left:2333.79px;top:196.31px;font-size:19.60px;letter-spacing:0.053px;color:#1f2329;-webkit-text-stroke:0.55px #1f2329;">Salary Revision(s)</div>
<div class="t" id="sal3" style="left:2498.79px;top:195.31px;font-size:20.10px;letter-spacing:-0.084px;color:#1f2329;">pending approval.</div>
<div class="t" id="approve" style="left:2335.69px;top:253.21px;font-size:18.90px;letter-spacing:-0.450px;color:#4a86e8;">Approve</div>
<div class="t" id="ppr1" style="left:331.73px;top:137.71px;font-size:23.40px;letter-spacing:0.100px;color:#2d2d2d;">Process Pay Run for</div>
<div class="t" id="ppr2" style="left:554.53px;top:137.71px;font-size:23.40px;letter-spacing:0.600px;color:#222222;-webkit-text-stroke:0.75px #222222;">April 2025</div>
<div class="t" id="ready" style="left:678.47px;top:143.10px;font-size:15.80px;letter-spacing:0.338px;color:#ffffff;-webkit-text-stroke:0.4px #ffffff;">READY</div>
<div class="t" id="lbl_net" style="left:368.55px;top:231.32px;font-size:14.80px;letter-spacing:0.132px;color:#5a5a5a;">EMPLOYEES' NET PAY</div>
<div class="t" id="ytp" style="left:395.77px;top:268.91px;font-size:14.20px;letter-spacing:-0.000px;color:#1b1b1b;-webkit-text-stroke:0.55px #1b1b1b;">YET TO PROCESS</div>
<div class="t" id="lbl_date" style="left:674.15px;top:231.10px;font-size:14.80px;letter-spacing:0.245px;color:#5a5a5a;">PAYMENT DATE</div>
<div class="t" id="lbl_no" style="left:862.55px;top:231.10px;font-size:14.80px;letter-spacing:0.030px;color:#5a5a5a;">NO. OF EMPLOYEES</div>
<div class="t" id="val_date" style="left:674.88px;top:261.60px;font-size:19.00px;letter-spacing:0.945px;color:#1b1b1b;-webkit-text-stroke:0.4px #1b1b1b;">30 Apr 2025</div>
<div class="t" id="msg" style="left:394.74px;top:319.60px;font-size:18.30px;letter-spacing:0.135px;color:#555555;">You haven't processed this pay run and it's past the pay day.</div>
<div class="t" id="create" style="left:2004.58px;top:237.20px;font-size:20.30px;letter-spacing:-0.588px;color:#ffffff;-webkit-text-stroke:0.4px #ffffff;">Create Pay Run</div>
<div class="t" id="es_title" style="left:332.75px;top:423.61px;font-size:23.70px;letter-spacing:0.090px;color:#1f2329;-webkit-text-stroke:0.4px #1f2329;">Employee Summary</div>
<div class="t" id="active" style="left:498.21px;top:566.10px;font-size:19.90px;letter-spacing:-0.330px;color:#1b1b1b;">Active Employees</div>
<div class="t" id="gcc" style="left:939.70px;top:688.71px;font-size:11.50px;letter-spacing:0.450px;color:#2a2a2a;-webkit-text-stroke:0.4px #2a2a2a;">GCC</div>
<div class="t" id="nationals" style="left:916.06px;top:701.01px;font-size:11.50px;letter-spacing:0.900px;color:#2a2a2a;-webkit-text-stroke:0.4px #2a2a2a;">NATIONALS</div>
<div class="t" id="expats" style="left:1027.50px;top:688.71px;font-size:11.50px;letter-spacing:0.720px;color:#2a2a2a;-webkit-text-stroke:0.4px #2a2a2a;">EXPATS</div>
<div class="t" id="viewemp" style="left:717.01px;top:820.10px;font-size:19.90px;letter-spacing:-0.277px;color:#2b63d4;">View Employees</div>
<div class="t" id="ss_title" style="left:1282.85px;top:424.31px;font-size:23.70px;letter-spacing:0.205px;color:#1f2329;-webkit-text-stroke:0.4px #1f2329;">Social Security Summary</div>
<div class="t" id="ty1" style="left:2102.30px;top:427.80px;font-size:18.60px;letter-spacing:-0.281px;color:#535c7a;">This Year</div>
<div class="t" id="gpssa" style="left:1434.71px;top:519.71px;font-size:15.00px;letter-spacing:0.112px;color:#222222;">GPSSA</div>
<div class="t" id="amt1" style="left:1435.57px;top:548.40px;font-size:18.60px;letter-spacing:0.315px;color:#111111;-webkit-text-stroke:0.75px #111111;">QAR9,975.00</div>
<div class="t" id="gosi" style="left:1434.74px;top:639.71px;font-size:15.00px;letter-spacing:0.450px;color:#222222;">GOSI</div>
<div class="t" id="amt2" style="left:1435.49px;top:668.90px;font-size:18.60px;letter-spacing:0.000px;color:#111111;-webkit-text-stroke:0.75px #111111;">QAR7,037.42</div>
<div class="t" id="sio" style="left:1434.75px;top:760.00px;font-size:15.00px;letter-spacing:0.450px;color:#222222;">SIO</div>
<div class="t" id="amt3" style="left:1435.43px;top:789.31px;font-size:18.60px;letter-spacing:0.409px;color:#111111;-webkit-text-stroke:0.75px #111111;">QAR10,458.00</div>
<div class="t" id="pc_title" style="left:331.91px;top:918.91px;font-size:23.70px;letter-spacing:0.166px;color:#1f2329;-webkit-text-stroke:0.4px #1f2329;">Payroll Cost Summary</div>
<div class="t" id="ty2" style="left:2101.73px;top:918.91px;font-size:18.60px;letter-spacing:-0.281px;color:#535c7a;">This Year</div>
<div class="t" id="y200" style="left:729.73px;top:1009.91px;font-size:17.80px;letter-spacing:0.000px;color:#666666;">200 K</div>
<div class="t" id="y150" style="left:730.38px;top:1081.30px;font-size:17.80px;letter-spacing:-0.112px;color:#666666;">150 K</div>
<div class="t" id="y100" style="left:730.43px;top:1153.01px;font-size:17.80px;letter-spacing:-0.112px;color:#666666;">100 K</div>
<div class="t" id="y50" style="left:739.16px;top:1224.30px;font-size:17.80px;letter-spacing:0.150px;color:#666666;">50 K</div>
<div class="t" id="y0" style="left:765.07px;top:1295.82px;font-size:17.80px;letter-spacing:0.000px;color:#666666;">0</div>
<div class="t" id="m_Jan" style="left:830.53px;top:1315.90px;font-size:14.60px;letter-spacing:0.800px;color:#666666;">Jan</div>
<div class="t" id="yr_Jan" style="left:823.70px;top:1329.71px;font-size:15.60px;letter-spacing:1.350px;color:#666666;">2025</div>
<div class="t" id="m_Feb" style="left:911.39px;top:1315.90px;font-size:14.60px;letter-spacing:0.800px;color:#666666;">Feb</div>
<div class="t" id="yr_Feb" style="left:905.06px;top:1329.71px;font-size:15.60px;letter-spacing:1.350px;color:#666666;">2025</div>
<div class="t" id="m_Mar" style="left:992.75px;top:1315.90px;font-size:14.60px;letter-spacing:0.800px;color:#666666;">Mar</div>
<div class="t" id="yr_Mar" style="left:986.42px;top:1329.71px;font-size:15.60px;letter-spacing:1.350px;color:#666666;">2025</div>
<div class="t" id="m_Apr" style="left:1075.11px;top:1315.90px;font-size:14.60px;letter-spacing:0.800px;color:#666666;">Apr</div>
<div class="t" id="yr_Apr" style="left:1067.78px;top:1329.71px;font-size:15.60px;letter-spacing:1.350px;color:#666666;">2025</div>
<div class="t" id="m_May" style="left:1153.47px;top:1315.90px;font-size:14.60px;letter-spacing:0.800px;color:#666666;">May</div>
<div class="t" id="yr_May" style="left:1149.14px;top:1329.71px;font-size:15.60px;letter-spacing:1.350px;color:#666666;">2025</div>
<div class="t" id="m_Jun" style="left:1237.33px;top:1315.90px;font-size:14.60px;letter-spacing:0.800px;color:#666666;">Jun</div>
<div class="t" id="yr_Jun" style="left:1230.50px;top:1329.71px;font-size:15.60px;letter-spacing:1.350px;color:#666666;">2025</div>
<div class="t" id="m_Jul" style="left:1321.19px;top:1315.90px;font-size:14.60px;letter-spacing:0.800px;color:#666666;">Jul</div>
<div class="t" id="yr_Jul" style="left:1311.86px;top:1329.71px;font-size:15.60px;letter-spacing:1.350px;color:#666666;">2025</div>
<div class="t" id="m_Aug" style="left:1399.55px;top:1315.90px;font-size:14.60px;letter-spacing:0.800px;color:#666666;">Aug</div>
<div class="t" id="yr_Aug" style="left:1393.22px;top:1329.71px;font-size:15.60px;letter-spacing:1.350px;color:#666666;">2025</div>
<div class="t" id="m_Sep" style="left:1479.91px;top:1315.90px;font-size:14.60px;letter-spacing:0.800px;color:#666666;">Sep</div>
<div class="t" id="yr_Sep" style="left:1474.58px;top:1329.71px;font-size:15.60px;letter-spacing:1.350px;color:#666666;">2025</div>
<div class="t" id="m_Oct" style="left:1562.77px;top:1315.90px;font-size:14.60px;letter-spacing:0.800px;color:#666666;">Oct</div>
<div class="t" id="yr_Oct" style="left:1555.94px;top:1329.71px;font-size:15.60px;letter-spacing:1.350px;color:#666666;">2025</div>
<div class="t" id="m_Nov" style="left:1642.63px;top:1315.90px;font-size:14.60px;letter-spacing:0.800px;color:#666666;">Nov</div>
<div class="t" id="yr_Nov" style="left:1637.30px;top:1329.71px;font-size:15.60px;letter-spacing:1.350px;color:#666666;">2025</div>
<div class="t" id="m_Dec" style="left:1724.49px;top:1315.90px;font-size:14.60px;letter-spacing:0.800px;color:#666666;">Dec</div>
<div class="t" id="yr_Dec" style="left:1718.66px;top:1329.71px;font-size:15.60px;letter-spacing:1.350px;color:#666666;">2025</div>
</body></html>
